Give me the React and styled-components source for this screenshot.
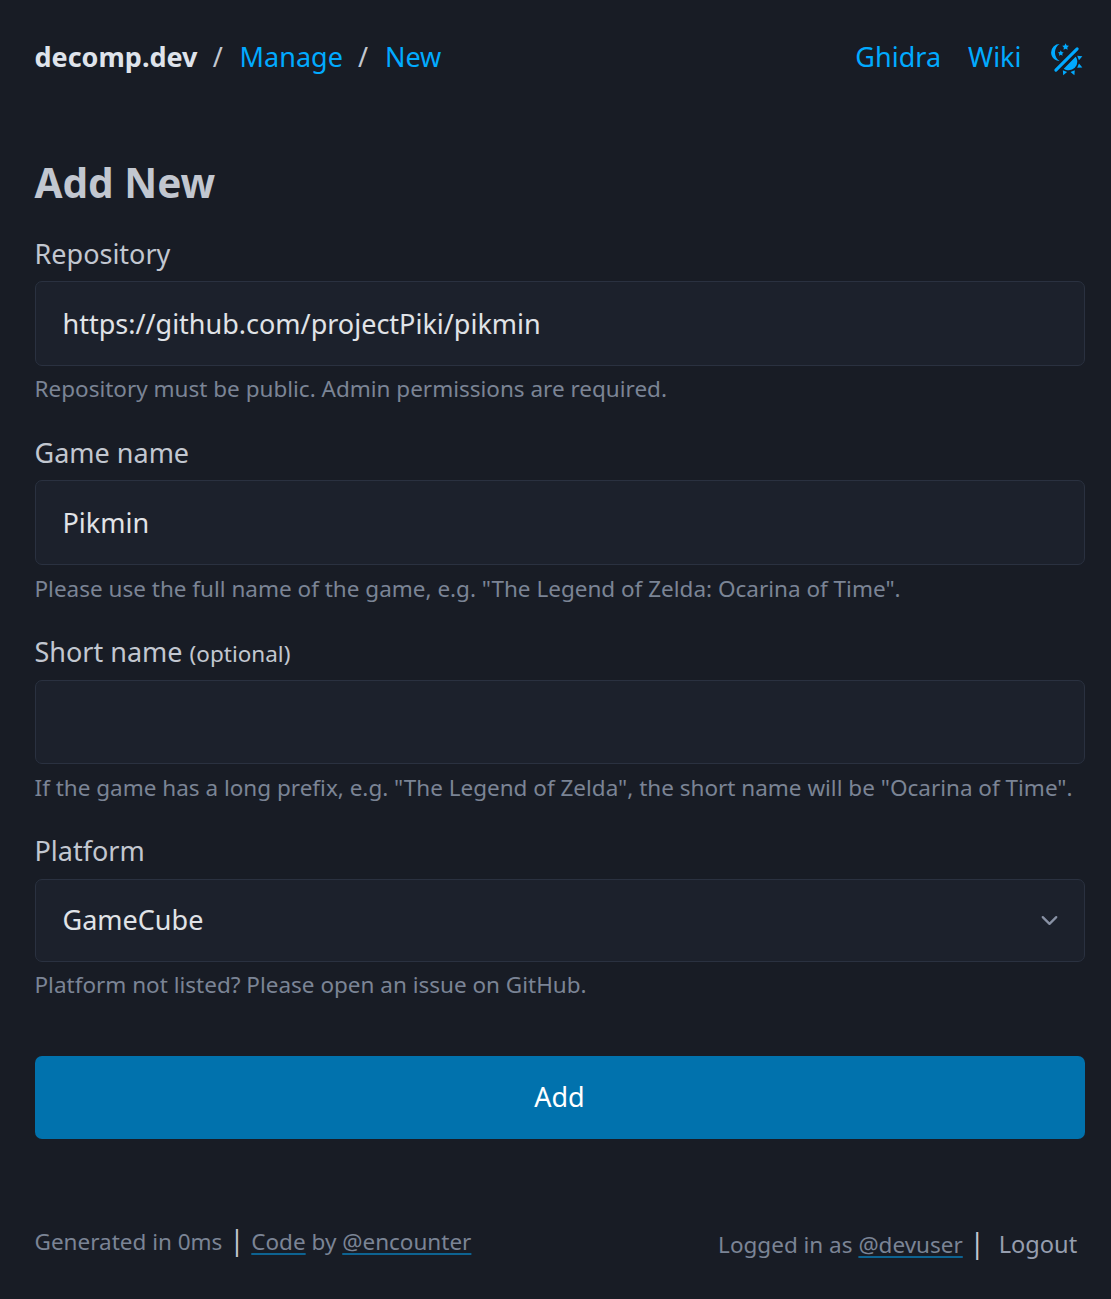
import React from "react";
import styled, { createGlobalStyle } from "styled-components";

const GlobalStyle = createGlobalStyle`
  html { font-size: 27px; background: #181c25; }
  body {
    margin: 0;
    background: #181c25;
    color: #c2c7d0;
    font-family: "Noto Sans", sans-serif;
    line-height: 1.5;
  }
  *, *::before, *::after { box-sizing: border-box; }
`;

const Page = styled.div`
  height: 1299px;
  padding: 0 26.5px 0 34.5px;
  display: flex;
  flex-direction: column;
`;

const Header = styled.header`
  display: flex;
  justify-content: space-between;
  height: 115px;
  padding-top: 37px;
`;

const Crumbs = styled.nav`
  display: flex;
  align-items: flex-start;
`;

const Slash = styled.span`
  margin: 0 16.8px 0 15.2px;
`;

const HeaderLinks = styled.nav`
  display: flex;
  align-items: flex-start;
  gap: 27px;
`;

const Brand = styled.strong`
  color: #dfe3eb;
  font-weight: 700;
`;

const NavLink = styled.a`
  color: #01aaff;
  text-decoration: none;
`;

const ThemeToggle = styled.a`
  color: #01aaff;
  display: flex;
  padding-top: 4px;
  svg {
    width: 37px;
    height: 37px;
    margin: 0 -0.5px;
    fill: currentColor;
    stroke: currentColor;
    stroke-width: 0;
  }
`;

const Title = styled.h2`
  margin: 45px 0 0;
  height: 76px;
  font-size: 40.5px;
  line-height: 46px;
  font-weight: 700;
`;

const Form = styled.form`
  display: flex;
  flex-direction: column;
`;

const Field = styled.div`
  display: flex;
  flex-direction: column;
  height: ${(p) => p.$height}px;
`;

const Label = styled.label`
  height: 45px;
  line-height: ${(p) => (p.$raised ? 34 : 36)}px;
  white-space: nowrap;
  small { font-size: 22.5px; line-height: 1; }
`;

const control = `
  width: 100%;
  margin: 0;
  border: 1px solid #2a3140;
  border-radius: 7px;
  background-color: #1c212c;
  color: #e0e3e7;
  font: inherit;
  padding: 0 27px;
  outline: none;
  flex-shrink: 0;
`;

const Input = styled.input`
  ${control}
  height: ${(p) => p.$height || 85}px;
`;

const SelectBox = styled.div`
  ${control}
  height: 83px;
  display: flex;
  align-items: center;
  justify-content: space-between;
  padding-right: 21px;
  svg { width: 27px; height: 27px; }
`;

const Hint = styled.small`
  margin-top: ${(p) => p.$gap || 7}px;
  font-size: 22.5px;
  line-height: 34px;
  color: #7b8495;
  white-space: nowrap;
`;

const SubmitButton = styled.button`
  height: 83px;
  border: 0;
  border-radius: 7px;
  background: #0172ad;
  color: #fff;
  font: inherit;
`;

const Footer = styled.footer`
  display: flex;
  justify-content: space-between;
  margin-top: 81px;
  white-space: nowrap;
`;

const FooterGroup = styled.div`
  display: flex;
  align-items: baseline;
  height: 41px;
  margin-top: ${(p) => p.$offset || 0}px;
  margin-right: ${(p) => p.$end || 0}px;
`;

const Muted = styled.small`
  font-size: 22.5px;
  color: #7b8495;
`;

const MutedLink = styled.a`
  color: #7b8495;
  text-decoration: underline 2px;
  text-decoration-color: rgba(1, 170, 255, 0.5);
  text-underline-offset: 0.125em;
`;

const Separator = styled.span`
  margin: 0 ${(p) => p.$after}px 0 7px;
`;

const Logout = styled.a`
  font-size: 23.6px;
  color: #969eaf;
`;

const ThemeIcon = () => (
  <svg viewBox="0 0 24 24" aria-hidden="true">
    <path d="M7.5,2C5.71,3.15 4.5,5.18 4.5,7.5C4.5,9.82 5.71,11.85 7.53,13C4.46,13 2,10.54 2,7.5A5.5,5.5 0 0,1 7.5,2Z" />
    <path strokeWidth="2" strokeLinecap="round" d="M18.9,5.1L5.1,18.9" />
    <polygon points="11.4,1.5 12.08,2.87 13.59,3.09 12.49,4.16 12.75,5.66 11.4,4.95 10.05,5.66 10.31,4.16 9.21,3.09 10.72,2.87" />
    <polygon points="8.3,6.05 8.88,7.21 10.15,7.4 9.23,8.3 9.45,9.58 8.3,8.98 7.15,9.58 7.37,8.3 6.45,7.4 7.72,7.21" />
    <path d="M19,13.5A5.5,5.5 0 0,1 13.5,19C12.28,19 11.15,18.6 10.24,17.93L17.93,10.24C18.6,11.15 19,12.28 19,13.5M14.6,20.08L17.37,18.93L17.13,22.28L14.6,20.08M18.93,17.38L20.08,14.61L22.28,17.15L18.93,17.38M20.08,12.42L18.94,9.64L22.28,9.88L20.08,12.42M9.63,18.93L12.4,20.08L9.87,22.27L9.63,18.93Z" />
  </svg>
);

const Chevron = () => (
  <svg viewBox="0 0 24 24" fill="none" stroke="#8891a4" strokeWidth="2" strokeLinecap="round" strokeLinejoin="round" aria-hidden="true">
    <polyline points="6 9 12 15 18 9" />
  </svg>
);

export default function App() {
  return (
    <>
      <GlobalStyle />
      <Page>
        <Header>
          <Crumbs>
            <Brand>decomp.dev</Brand>
            <Slash>/</Slash>
            <NavLink>Manage</NavLink>
            <Slash>/</Slash>
            <NavLink>New</NavLink>
          </Crumbs>
          <HeaderLinks>
            <NavLink>Ghidra</NavLink>
            <NavLink>Wiki</NavLink>
            <ThemeToggle><ThemeIcon /></ThemeToggle>
          </HeaderLinks>
        </Header>
        <Title>Add New</Title>
        <Form>
          <Field $height={199}>
            <Label>Repository</Label>
            <Input defaultValue="https://github.com/projectPiki/pikmin" />
            <Hint $gap={6}>Repository must be public. Admin permissions are required.</Hint>
          </Field>
          <Field $height={200}>
            <Label>Game name</Label>
            <Input defaultValue="Pikmin" />
            <Hint>Please use the full name of the game, e.g. "The Legend of Zelda: Ocarina of Time".</Hint>
          </Field>
          <Field $height={199}>
            <Label $raised>Short name <small>(optional)</small></Label>
            <Input $height={84} />
            <Hint>If the game has a long prefix, e.g. "The Legend of Zelda", the short name will be "Ocarina of Time".</Hint>
          </Field>
          <Field $height={222}>
            <Label $raised>Platform</Label>
            <SelectBox>GameCube<Chevron /></SelectBox>
            <Hint $gap={6}>Platform not listed? Please open an issue on GitHub.</Hint>
          </Field>
          <SubmitButton type="button">Add</SubmitButton>
        </Form>
        <Footer>
          <FooterGroup>
            <Muted>Generated in 0ms</Muted>
            <Separator $after={7}>|</Separator>
            <Muted><MutedLink>Code</MutedLink> by <MutedLink>@encounter</MutedLink></Muted>
          </FooterGroup>
          <FooterGroup $offset={3} $end={7.3}>
            <Muted>Logged in as <MutedLink>@devuser</MutedLink></Muted>
            <Separator $after={14}>|</Separator>
            <Logout>Logout</Logout>
          </FooterGroup>
        </Footer>
      </Page>
    </>
  );
}
